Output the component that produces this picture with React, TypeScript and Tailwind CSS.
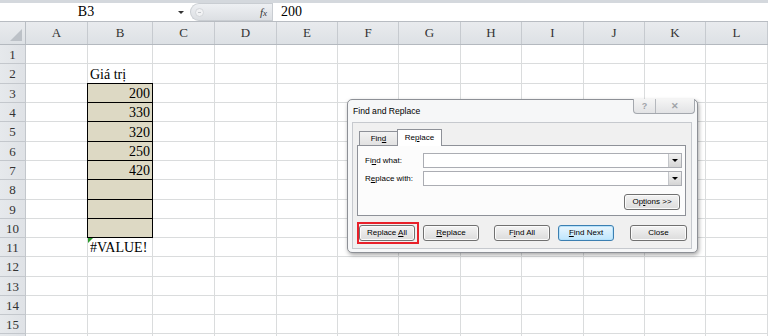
import React from 'react';

const COLS = ['A', 'B', 'C', 'D', 'E', 'F', 'G', 'H', 'I', 'J', 'K', 'L'];
// row heights alternate 19/20 so row 15 lands where the screenshot has it
const ROW_H: Record<number, string> = {
  1: 'h-[19px]', 2: 'h-[20px]', 3: 'h-[19px]', 4: 'h-[19px]', 5: 'h-[20px]', 6: 'h-[19px]',
  7: 'h-[19px]', 8: 'h-[20px]', 9: 'h-[19px]', 10: 'h-[19px]', 11: 'h-[19px]', 12: 'h-[20px]',
  13: 'h-[19px]', 14: 'h-[19px]', 15: 'h-[19px]', 16: 'h-[19px]',
};
const ROWS = Array.from({ length: 16 }, (_, i) => i + 1);
const VALUES: Record<number, string> = { 3: '200', 4: '330', 5: '320', 6: '250', 7: '420' };

const gridTpl =
  'grid grid-cols-[26px_62px_65px_62px_62px_61px_61px_62px_61px_62px_61px_61px_62px]';

function FormulaBar() {
  return (
    <div className="flex h-[19px] border-b border-[#b8bcc2] bg-white text-[14px] leading-[16px] text-black">
      <div className="w-[172px] flex items-center justify-center">B3</div>
      <div className="w-[18px] flex items-center justify-center">
        <div className="w-0 h-0 border-l-[3px] border-r-[3px] border-t-[3px] border-l-transparent border-r-transparent border-t-[#333]" />
      </div>
      <div className="w-[82px] flex items-center rounded-l-full border-y border-l border-[#c9cdd2] bg-gradient-to-b from-[#eef0f3] to-[#dcdfe3]">
        <div className="ml-[4px] w-[9px] h-[9px] rounded-full border border-[#d3d6da] bg-[#f1f2f4] flex items-center justify-center">
          <div className="w-[3px] h-px bg-[#c3c6ca]" />
        </div>
        <div className="ml-auto mr-[5px] italic text-[11px] text-[#333]">
          f<span className="text-[9px]">x</span>
        </div>
      </div>
      <div className="flex-1 flex items-center pl-[8px] border-l border-[#c9cdd2]">200</div>
    </div>
  );
}

function HeaderRow() {
  return (
    <div className={`${gridTpl} h-[23px] border-b border-[#b4b9bf] bg-gradient-to-b from-[#e9ebee] to-[#dde1e5] text-[13px] leading-[16px] text-[#333]`}>
      <div className="flex items-end justify-end pr-[3px] pb-[3px] border-r border-[#b9bec4]">
        <svg width="12" height="12" viewBox="0 0 12 12">
          <path d="M12 0 L12 12 L0 12 Z" fill="#bcc1c7" />
        </svg>
      </div>
      {COLS.map((c) => (
        <div key={c} className="flex items-center justify-center border-r border-[#c6cacf]">
          {c}
        </div>
      ))}
    </div>
  );
}

function Cell({ row, col }: { row: number; col: string }) {
  const tan = col === 'B' && row >= 3 && row <= 10;
  if (tan) {
    return (
      <div
        className={`flex items-end justify-end pr-[2px] bg-[#ddd9c4] border-r border-b border-r-black border-b-black ${
          row === 3 ? 'shadow-[-1px_0_0_#000,-1px_-1px_0_#000,0_-1px_0_#000]' : 'shadow-[-1px_0_0_#000]'
        }`}
      >
        <span>{VALUES[row] ?? ''}</span>
      </div>
    );
  }
  if (col === 'B' && row === 2) {
    return (
      <div className="flex items-end pl-[2px] border-r border-b border-[#dadcdd]">
        <span>Giá trị</span>
      </div>
    );
  }
  if (col === 'B' && row === 11) {
    return (
      <div className="relative flex items-end pl-[2px] border-r border-b border-[#dadcdd]">
        <div className="absolute top-0 left-0 w-0 h-0 border-t-[5px] border-r-[5px] border-t-[#2c9a2c] border-r-transparent" />
        <span>#VALUE!</span>
      </div>
    );
  }
  return <div className="border-r border-b border-[#dadcdd]" />;
}

function Sheet() {
  return (
    <div className="text-[14px] leading-[17px] text-black">
      {ROWS.map((r) => (
        <div key={r} className={`${gridTpl} ${ROW_H[r]}`}>
          <div className="flex items-center justify-center bg-gradient-to-r from-[#e6e9ec] to-[#dfe2e6] border-r border-b border-[#c3c7cc] text-[13px] leading-[15px] text-[#333]">
            {r < 16 ? r : ''}
          </div>
          {COLS.map((c) => (
            <Cell key={c} row={r} col={c} />
          ))}
        </div>
      ))}
    </div>
  );
}

function Btn({ children, w = 'w-[56px]', def = false }: { children: React.ReactNode; w?: string; def?: boolean }) {
  return (
    <div
      className={`${w} h-[16px] rounded-[3px] border flex items-center justify-center bg-gradient-to-b ${
        def
          ? 'border-[#3c7fb1] from-[#eaf6fd] to-[#bee6fd] shadow-[inset_0_0_0_1px_#b7e2fb]'
          : 'border-[#707070] from-[#f3f3f3] to-[#dcdcdc] shadow-[inset_0_0_0_1px_#fbfbfb]'
      }`}
    >
      <span className="whitespace-pre">{children}</span>
    </div>
  );
}

function Combo() {
  return (
    <div className="ml-auto w-[259px] h-[15px] border border-[#abadb3] bg-white flex justify-end">
      <div className="w-[13px] h-full border-l border-[#c4c6ca] bg-gradient-to-b from-[#f2f2f2] to-[#d5d5d5] flex items-center justify-center">
        <div className="w-0 h-0 border-l-[3px] border-r-[3px] border-t-[3px] border-l-transparent border-r-transparent border-t-black" />
      </div>
    </div>
  );
}

function Dialog() {
  return (
    <div className="absolute left-[347px] top-[99px] w-[351px] h-[154px] rounded-[5px] border border-[#8d9096] bg-[#f6f7f8] shadow-[1px_2px_4px_rgba(0,0,0,0.35)] font-['Liberation_Sans',Arial,sans-serif] text-[8px] leading-[10px] text-black">
      <div className="relative h-[22px] flex items-center pl-[5px] text-[8.6px]">
        Find and Replace
        <div className="absolute top-[-1px] right-[2px] flex h-[15px] rounded-b-[4px] border border-t-0 border-[#a4a8ae] bg-gradient-to-b from-[#f5f5f5] to-[#e2e3e5] overflow-hidden">
          <div className="w-[22px] flex items-center justify-center border-r border-[#b5b8bd] text-[9px] font-bold text-[#a0a3a8]">?</div>
          <div className="w-[38px] flex items-center justify-center text-[9px] font-bold text-[#a0a3a8]">✕</div>
        </div>
      </div>
      <div className="ml-[4px] w-[340px] h-[127px] border border-[#c6c9ce] bg-[#f0f0f0]">
        <div className="ml-[4px] mt-[5px] w-[329px]">
          <div className="flex items-end h-[17px] pl-[2px]">
            <div className="w-[39px] h-[14px] border border-b-0 border-[#8e9198] bg-gradient-to-b from-[#f2f2f2] to-[#e2e2e2] flex items-center justify-center">
              <span>Fin<u>d</u></span>
            </div>
            <div className="w-[45px] h-[17px] -ml-px border border-b-0 border-[#8e9198] bg-white flex items-center justify-center relative top-px">
              <span>Re<u>p</u>lace</span>
            </div>
          </div>
          <div className="h-[71px] border border-[#8e9198] bg-[#fcfcfc] px-[3px] pl-[7px] pt-[7px]">
            <div className="flex items-center h-[15px]">
              <span>Fi<u>n</u>d what:</span>
              <Combo />
            </div>
            <div className="flex items-center h-[15px] mt-[3px]">
              <span>R<u>e</u>place with:</span>
              <Combo />
            </div>
            <div className="flex justify-end mt-[8px] pr-[2px]">
              <Btn>
                Op<u>t</u>ions &gt;&gt;
              </Btn>
            </div>
          </div>
        </div>
        <div className="flex items-center mt-[6px] ml-[4px]">
          <div className="w-[62px] h-[22px] border-2 border-[#e8202a] pt-px">
            <Btn>
              {'Replace '}<u>A</u>ll
            </Btn>
          </div>
          <div className="ml-[4px]">
            <Btn>
              <u>R</u>eplace
            </Btn>
          </div>
          <div className="ml-[15px]">
            <Btn>
              F<u>i</u>nd All
            </Btn>
          </div>
          <div className="ml-[8px]">
            <Btn def>
              <u>F</u>ind Next
            </Btn>
          </div>
          <div className="ml-[16px]">
            <Btn w="w-[57px]">Close</Btn>
          </div>
        </div>
      </div>
    </div>
  );
}

export default function App() {
  return (
    <div className="relative w-[768px] h-[336px] overflow-hidden bg-white font-['Liberation_Serif','Times_New_Roman',serif]">
      <div className="h-[3px] bg-[#d4d8dd]" />
      <FormulaBar />
      <HeaderRow />
      <Sheet />
      <Dialog />
    </div>
  );
}
